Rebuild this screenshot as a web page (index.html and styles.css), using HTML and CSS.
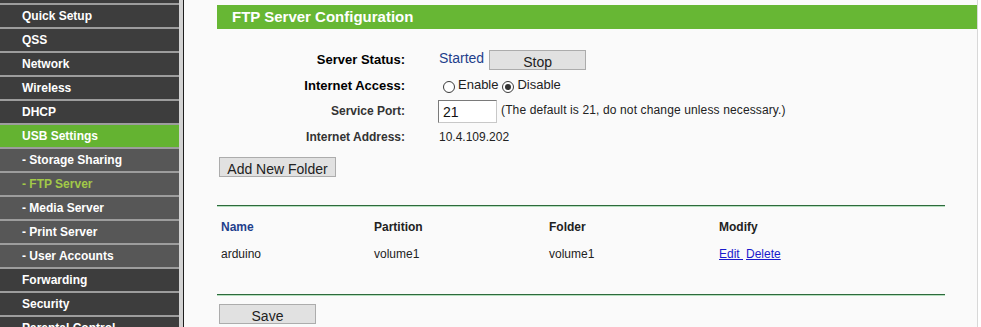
FILE: index.html
```html
<!DOCTYPE html>
<html lang="en">
<head>
    <meta charset="UTF-8">
    <title>FTP Server Configuration</title>
    <link rel="stylesheet" href="styles.css">
</head>
<body>
    <div class="page">
        <ul class="menu">
            <li class="cut"></li>
            <li>Quick Setup</li>
            <li>QSS</li>
            <li>Network</li>
            <li>Wireless</li>
            <li>DHCP</li>
            <li class="active">USB Settings</li>
            <li class="sub">- Storage Sharing</li>
            <li class="sub current">- FTP Server</li>
            <li class="sub">- Media Server</li>
            <li class="sub">- Print Server</li>
            <li class="sub">- User Accounts</li>
            <li>Forwarding</li>
            <li>Security</li>
            <li>Parental Control</li>
        </ul>

        <div class="main">
            <div class="title">FTP Server Configuration</div>

            <div class="form">
                <div class="form-row">
                    <label class="strong">Server Status:</label>
                    <div class="value">
                        <span class="status">Started</span>
                        <button class="btn btn-stop">Stop</button>
                    </div>
                </div>
                <div class="form-row">
                    <label class="strong">Internet Access:</label>
                    <div class="value">
                        <input type="radio" name="access" class="radio" id="enable">
                        <span class="radio-text">Enable</span>
                        <input type="radio" name="access" class="radio" id="disable" checked>
                        <span class="radio-text">Disable</span>
                    </div>
                </div>
                <div class="form-row">
                    <label>Service Port:</label>
                    <div class="value">
                        <input type="text" class="port" value="21">
                        <span class="hint">(The default is 21, do not change unless necessary.)</span>
                    </div>
                </div>
                <div class="form-row">
                    <label>Internet Address:</label>
                    <div class="value">10.4.109.202</div>
                </div>
            </div>

            <button class="btn btn-add">Add New Folder</button>

            <div class="list">
                <div class="line"></div>
                <div class="list-row list-head">
                    <span class="col-name">Name</span>
                    <span>Partition</span>
                    <span>Folder</span>
                    <span>Modify</span>
                </div>
                <div class="list-row list-item">
                    <span>arduino</span>
                    <span>volume1</span>
                    <span>volume1</span>
                    <span><a href="#">Edit </a><a href="#" class="del">Delete</a></span>
                </div>
                <div class="line line-bottom"></div>
            </div>

            <button class="btn btn-save">Save</button>
        </div>
    </div>
</body>
</html>
```

FILE: styles.css
```css
body {
    margin: 0;
    background-color: #fff;
    font-family: "Liberation Sans", Arial, sans-serif;
    overflow: hidden;
    height: 327px;
}
.page {
    display: flex;
    width: 978px;
    height: 327px;
}

/* left menu */
.menu {
    list-style: none;
    margin: 0;
    padding: 0;
    width: 179px;
    border-right: 4px solid #d2d2d2;
    background-color: #3d3d3d;
    flex-shrink: 0;
}
.menu li {
    height: 22px;
    line-height: 23px;
    padding-left: 22px;
    border-bottom: 2px solid #9d9d9d;
    background-color: #3d3d3d;
    color: #fff;
    font-size: 12px;
    font-weight: bold;
}
.menu li.cut {
    height: 3px;
}
.menu li.active {
    background-color: #64b331;
}
.menu li.sub {
    background-color: #575757;
}
.menu li.current {
    color: #a2c948;
}

/* main area */
.main {
    flex: 1;
    background-color: #fafafa;
    border-left: 1px solid #1e1e1e;
    border-right: 1px solid #d8d8d8;
    padding: 5px 0 0 33px;
}
.title {
    height: 24px;
    line-height: 24px;
    padding-left: 15px;
    background-color: #67b734;
    color: #fff;
    font-size: 15px;
    font-weight: bold;
}
.form {
    margin-top: 17px;
}
.form-row {
    display: grid;
    grid-template-columns: 188px auto;
    column-gap: 34px;
    height: 26px;
    align-items: center;
    font-size: 12px;
    color: #222;
}
.form-row label {
    text-align: right;
    font-weight: bold;
    color: #333;
}
.form-row label.strong {
    font-size: 13px;
    color: #000;
}
.value {
    display: flex;
    align-items: center;
}
.status {
    font-size: 14px;
    color: #1f3f8c;
    margin-right: 5px;
    margin-top: -2px;
}
.radio {
    appearance: none;
    width: 12px;
    height: 12px;
    margin: 4px 3px 0 4px;
    border: 1px solid #3a3a3a;
    border-radius: 50%;
    background-color: #fff;
    position: relative;
}
.radio:checked::after {
    content: "";
    position: absolute;
    left: 2px;
    top: 2px;
    width: 6px;
    height: 6px;
    border-radius: 50%;
    background-color: #333;
}
.radio-text {
    font-size: 13px;
    margin-top: -2px;
}
.port {
    width: 59px;
    height: 23px;
    box-sizing: border-box;
    margin-left: -1px;
    padding: 2px 4px 0;
    border: 1px solid #7a7a7a;
    border-right-color: #c8c8c8;
    border-bottom-color: #c8c8c8;
    background-color: #fff;
    font-family: "Liberation Sans", Arial, sans-serif;
    font-size: 14px;
    color: #111;
}
.hint {
    margin-left: 4px;
    margin-top: -3px;
    letter-spacing: 0.13px;
}

/* buttons */
.btn {
    display: block;
    height: 20px;
    padding: 3px 0 0;
    background-color: #e1e1e1;
    border: 1px solid #acacac;
    font-family: "Liberation Sans", Arial, sans-serif;
    font-size: 14px;
    color: #222;
}
.btn-stop {
    width: 97px;
    height: 20px;
    margin-top: 2px;
}
.btn-add {
    width: 117px;
    margin: 7px 0 0 2px;
}
.btn-save {
    width: 97px;
    margin: 8px 0 0 2px;
}

/* folder list */
.list {
    width: 728px;
    margin-top: 28px;
}
.line {
    height: 1px;
    border-top: 1px solid #2d6a3c;
    background-color: #b5dfbe;
}
.line-bottom {
    margin-top: 29px;
}
.list-row {
    display: grid;
    grid-template-columns: 153px 175px 170px auto;
    padding-left: 4px;
    height: 26px;
    align-items: center;
    font-size: 12px;
    color: #222;
}
.list-head {
    margin-top: 8px;
    height: 24px;
    font-weight: bold;
}
.list-item {
    padding-top: 3px;
    height: 23px;
}
.col-name {
    color: #1f3f8c;
}
.list-row a {
    color: #1a1acc;
}
.list-row a.del {
    margin-left: 3px;
}
```
